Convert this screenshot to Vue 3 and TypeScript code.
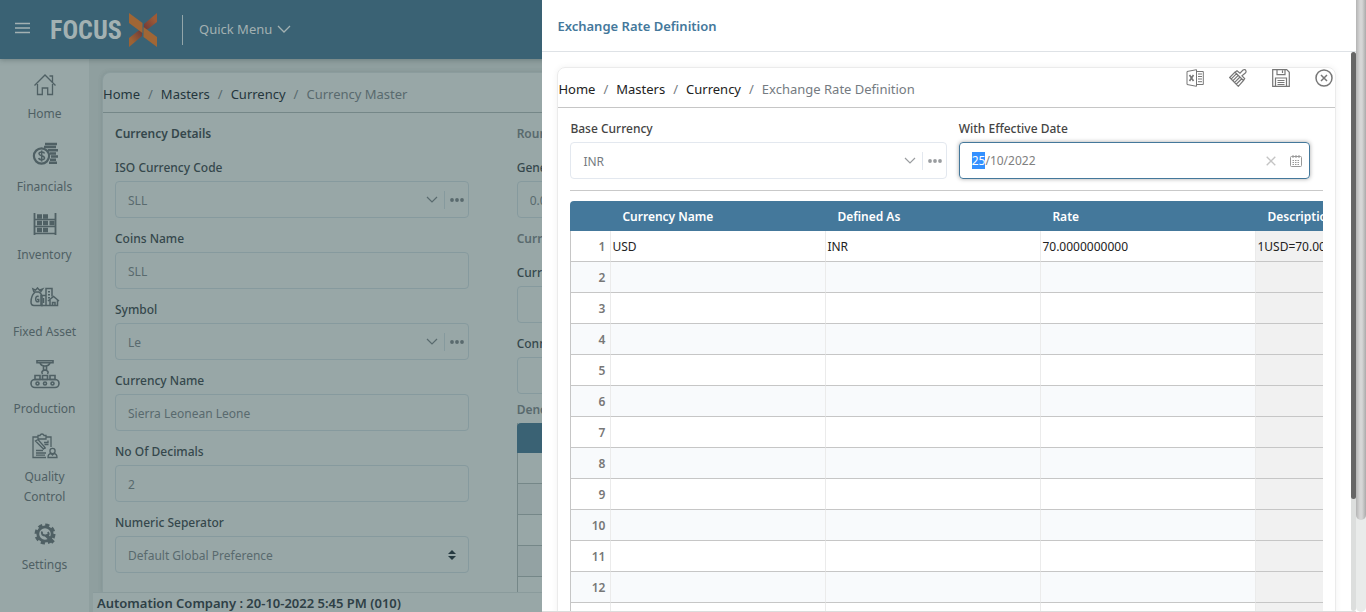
<script setup lang="ts">
import { onMounted, ref } from 'vue'

interface NavItem { label: string; icon: string; size: string }
interface Field { id: string; label: string; value: string; kind: 'combo' | 'text' | 'select' }

const nav: NavItem[] = [
  { label: 'Home', icon: 'home', size: 'first' },
  { label: 'Financials', icon: 'coins', size: 'medium' },
  { label: 'Inventory', icon: 'shelf', size: 'short' },
  { label: 'Fixed Asset', icon: 'asset', size: 'tall' },
  { label: 'Production', icon: 'production', size: 'tall' },
  { label: 'Quality Control', icon: 'quality', size: 'short' },
  { label: 'Settings', icon: 'gear', size: 'short' },
]

const fields: Field[] = [
  { id: 'iso', label: 'ISO Currency Code', value: 'SLL', kind: 'combo' },
  { id: 'coins', label: 'Coins Name', value: 'SLL', kind: 'text' },
  { id: 'symbol', label: 'Symbol', value: 'Le', kind: 'combo' },
  { id: 'name', label: 'Currency Name', value: 'Sierra Leonean Leone', kind: 'text' },
  { id: 'decimals', label: 'No Of Decimals', value: '2', kind: 'text' },
  { id: 'separator', label: 'Numeric Seperator', value: 'Default Global Preference', kind: 'select' },
]

const columns: string[] = ['Currency Name', 'Defined As', 'Rate', 'Description']
const rows: string[][] = Array.from({ length: 13 }, (_, i) =>
  i === 0 ? ['USD', 'INR', '70.0000000000', '1USD=70.0000000000INR'] : ['', '', '', ''],
)

const effectiveDate = ref('25/10/2022')
const dateInput = ref<HTMLInputElement | null>(null)

onMounted(() => {
  dateInput.value?.focus({ preventScroll: true })
  dateInput.value?.setSelectionRange(0, 2)
})
</script>

<template>
  <div class="shell">
    <div class="page">
      <header class="topbar">
        <button class="burger" type="button" aria-label="Toggle menu">
          <svg width="15" height="12" viewBox="0 0 15 12"><path d="M0 1.5h15M0 6h15M0 10.5h15" stroke="currentColor" stroke-width="1.6" /></svg>
        </button>
        <a class="logo" href="#">
          <span>FOCUS</span>
          <svg width="28" height="34" viewBox="0 0 28 34">
            <defs>
              <linearGradient id="armLow" x1="0" y1="1" x2="1" y2="0"><stop offset="0.3" stop-color="#9c6234" /><stop offset="1" stop-color="#6f3838" /></linearGradient>
              <linearGradient id="armHigh" x1="1" y1="0" x2="0" y2="1"><stop offset="0.3" stop-color="#9c5a36" /><stop offset="1" stop-color="#6f3838" /></linearGradient>
            </defs>
            <path d="M0 34V25L9 18Q13 16 13 20V23Z" fill="url(#armLow)" />
            <path d="M28 0V9L19 16Q15 18 15 14V11Z" fill="url(#armHigh)" />
            <path d="M0 0 13.5 10V20L0 10ZM28 34 14.5 24V14L28 24Z" fill="#a06635" />
          </svg>
        </a>
        <button class="quick" type="button">
          Quick Menu
          <svg width="14" height="8" viewBox="0 0 14 8"><path d="M1 1l6 6 6-6" fill="none" stroke="currentColor" stroke-width="1.3" /></svg>
        </button>
      </header>

      <div class="body">
        <nav class="sidebar">
          <a v-for="item in nav" :key="item.label" class="nav-item" href="#">
            <span class="nav-icon" :class="item.size">
              <svg v-if="item.icon === 'home'" width="24" height="24" viewBox="0 0 24 24" fill="none" stroke="currentColor" stroke-width="1.3">
                <path d="M1.5 12.5 12 2l10.500 10.500M16.500 3h3v6.500M4.500 11v10.500h4.800v-6.500h5.400v6.500h4.800V11" />
              </svg>
              <svg v-else-if="item.icon === 'coins'" width="26" height="24" viewBox="0 0 26 24" fill="none" stroke="currentColor">
                <circle cx="9.500" cy="14" r="7.600" stroke-width="2.200" />
                <path d="M12.500 11.500c-.5-2-5.500-2-5.500.3 0 2.500 5.500 1.500 5.500 4.200 0 2.300-5.300 2.300-5.800 0M9.700 8.500v11" stroke-width="1.500" />
                <path d="M13 2h12M12 5h12M16 8.200h10M18 11.400h6M19 14.600h7M18 17.800h6M17 20.800h8" stroke-width="2.500" />
              </svg>
              <svg v-else-if="item.icon === 'shelf'" width="24" height="24" viewBox="0 0 24 24" fill="none" stroke="currentColor">
                <path d="M1.500 1v22M22.500 1v22" stroke-width="1.800" />
                <path d="M1 7.500h22M1 14.500h22M1 21.500h22" stroke-width="1.400" />
                <path d="M4 4.500h5M10 4.500h5M4 11h5M10 11h5M16.500 11h5M4 18h5M10 18h5" stroke-width="4.400" />
              </svg>
              <svg v-else-if="item.icon === 'asset'" width="30" height="20" viewBox="0 0 30 20" fill="none" stroke="currentColor" stroke-width="1.500">
                <path d="M5 5C1 9 1 12 1 15q0 3.500 3 3.500h8V9Q11 6 9 5ZM4 5 3 2l2.500 1.200L7.500 1l2 2.200L12.500 2 10.500 5M8.700 9.500q-3-1-3 2.500t3 2.500v-2H7" />
                <path d="M11 18.500V8.500h5V1.500h6v8M16 8v10.500M13.500 11v5" />
                <path d="M19 4v9" stroke-width="2" stroke-dasharray="1.500 1.500" />
                <path d="m18 14 5.500-4.500 5.500 4.500M20 13v5.500h7.500V13M22.500 18.500v-3H25v3M11 18.500h9" />
              </svg>
              <svg v-else-if="item.icon === 'production'" width="30" height="30" viewBox="0 0 30 30" fill="none" stroke="currentColor" stroke-width="1.600">
                <path d="M7 1.800h16v2H7zM10 4q1 3 5 3t5-3M13.500 7h3v4h-3zM12.500 15q-2-3 2.500-4 4.500 1 2.500 4M5 16.500h5v4H5zM12.500 16.500h5v4h-5zM20 16.500h5v4h-5z" />
                <rect x="1" y="20.500" width="28" height="8" rx="4" />
                <circle cx="7.500" cy="24.500" r="1.500" /><circle cx="15" cy="24.500" r="1.500" /><circle cx="22.500" cy="24.500" r="1.500" />
              </svg>
              <svg v-else-if="item.icon === 'quality'" width="26" height="26" viewBox="0 0 26 26" fill="none" stroke="currentColor" stroke-width="1.300">
                <path d="M14 24.500H1V4h5M14 4h5v10M6 2.500h2q.500-1.500 2-1.500t2 1.500h2V6H6zM3.500 8l8 8 1.500-1.500L6 6.500zM13 16v-2M12 9.500h4v-2M12.500 11.500h4M4 17.500h7M4 20h10M4 22.200h9" />
                <circle cx="20.500" cy="18" r="2.600" />
                <path d="M16 24.500q0-3.500 3-4l1.500 1.500 1.500-1.500q3 .5 3 4z" />
              </svg>
              <svg v-else width="22" height="22" viewBox="0 0 22 22" fill="none" stroke="currentColor">
                <circle cx="11" cy="11" r="9.200" stroke-width="2.600" stroke-dasharray="4.200 3.020" />
                <circle cx="11" cy="11" r="7.200" stroke-width="2.800" />
                <path d="m12 12 7.500 7.500" stroke-width="3.600" />
                <path d="M8 8.500q-1 4 3.500 4t2.500-3.500" stroke-width="2" />
              </svg>
            </span>
            <span class="nav-label">{{ item.label }}</span>
          </a>
        </nav>

        <main class="main">
          <section class="card">
            <nav class="crumbs" aria-label="Page path">
              <a href="#">Home</a><i>/</i><a href="#">Masters</a><i>/</i><a href="#">Currency</a><i>/</i><span>Currency Master</span>
            </nav>
            <div class="columns">
              <div>
                <h2 class="strong">Currency Details</h2>
                <div v-for="f in fields" :key="f.id">
                  <label :for="f.id">{{ f.label }}</label>
                  <div class="control">
                    <select v-if="f.kind === 'select'" :id="f.id"><option>{{ f.value }}</option></select>
                    <input v-else :id="f.id" type="text" :value="f.value" />
                    <svg v-if="f.kind === 'select'" class="sorter" width="8" height="10" viewBox="0 0 8 10"><path d="M0 4l4-4 4 4zM0 6h8l-4 4z" fill="currentColor" /></svg>
                    <template v-if="f.kind === 'combo'">
                      <button type="button" aria-label="Open list"><svg width="12" height="8" viewBox="0 0 12 8"><path d="M1 1l5 5 5-5" fill="none" stroke="currentColor" stroke-width="1.200" /></svg></button>
                      <button class="more" type="button" aria-label="More"><svg width="14" height="4" viewBox="0 0 14 4" fill="currentColor"><circle cx="2" cy="2" r="1.900" /><circle cx="7" cy="2" r="1.900" /><circle cx="12" cy="2" r="1.900" /></svg></button>
                    </template>
                  </div>
                </div>
              </div>
              <div>
                <h2>Rounding</h2>
                <label for="general">General</label>
                <div class="control"><input id="general" type="text" value="0.00" /></div>
                <h2>Currency</h2>
                <label for="unit">Currency</label>
                <div class="control"><input id="unit" type="text" /></div>
                <label for="connector">Connector</label>
                <div class="control"><input id="connector" type="text" /></div>
                <h2 class="tight">Denomination</h2>
                <div class="mini"><div v-for="n in 6" :key="n"></div></div>
              </div>
            </div>
          </section>
          <footer class="status">Automation Company : 20-10-2022 5:45 PM (010)</footer>
        </main>
      </div>

      <aside class="drawer">
        <h1>Exchange Rate Definition</h1>
        <div class="drawer-scroll">
          <div class="drawer-body">
            <section class="panel">
              <div class="panel-head">
                <nav class="crumbs" aria-label="Drawer path">
                  <a href="#">Home</a><i>/</i><a href="#">Masters</a><i>/</i><a href="#">Currency</a><i>/</i><span>Exchange Rate Definition</span>
                </nav>
                <div class="tools">
                  <button type="button" aria-label="Export to Excel">
                    <svg width="18" height="18" viewBox="0 0 18 18" fill="none" stroke="currentColor"><path d="M1 2.500 10.500.7v16.600L1 15.500zM10.500 2.500h6.800v13h-6.800M12 5h4M12 7.500h4M12 10h4M12 12.700h4" /><path d="M3.500 6l4 6M7.500 6l-4 6" stroke-width="1.600" /></svg>
                  </button>
                  <button type="button" aria-label="Clear">
                    <svg width="18" height="18" viewBox="0 0 18 18" fill="none" stroke="currentColor" stroke-width="1.200"><path d="M.7 8.500 6 3.200l8.500 8.300L9.300 17.300zM6 3.200l2-1.500 3 2.500L14 1q2.500-1.200 3 1 .3 1-1 2.300l-3 2.500 2.700 2.700-1.200 2M2.300 9.800l5-5M4 11.600l5.200-5.200M5.700 13.300 11 8M7.400 15l5.400-5.200" /></svg>
                  </button>
                  <button type="button" aria-label="Save">
                    <svg width="18" height="18" viewBox="0 0 18 18" fill="none" stroke="currentColor" stroke-width="1.200"><path d="M.7.700h14l2.600 2.600v14H.700zM5 .7v5h8v-5M10.500 1.500v2.500M3.500 17.300V9h11v8.300M5.500 11.500h7M5.500 13.500h7M5.500 15.500h7" /></svg>
                  </button>
                  <button type="button" aria-label="Close">
                    <svg width="18" height="18" viewBox="0 0 18 18" fill="none" stroke="currentColor" stroke-width="1.500"><circle cx="9" cy="9" r="8" /><path d="m6 6 6 6M12 6l-6 6" /></svg>
                  </button>
                </div>
              </div>

              <div class="panel-body">
                <div class="filters">
                  <div>
                    <label for="base">Base Currency</label>
                    <div class="control">
                      <input id="base" type="text" value="INR" />
                      <button type="button" aria-label="Open list"><svg width="12" height="8" viewBox="0 0 12 8"><path d="M1 1l5 5 5-5" fill="none" stroke="currentColor" stroke-width="1.200" /></svg></button>
                      <button class="more" type="button" aria-label="More"><svg width="14" height="4" viewBox="0 0 14 4" fill="currentColor"><circle cx="2" cy="2" r="1.900" /><circle cx="7" cy="2" r="1.900" /><circle cx="12" cy="2" r="1.900" /></svg></button>
                    </div>
                  </div>
                  <div class="date">
                    <label for="effective">With Effective Date</label>
                    <div class="control focused">
                      <input id="effective" ref="dateInput" v-model="effectiveDate" type="text" />
                      <button class="clear" type="button" aria-label="Clear date"><svg width="10" height="10" viewBox="0 0 10 10"><path d="m.7.700 8.600 8.600M9.300.700.700 9.300" stroke="currentColor" stroke-width="1.300" /></svg></button>
                      <button class="calendar" type="button" aria-label="Pick date"><svg width="12" height="12" viewBox="0 0 12 12" fill="none" stroke="currentColor"><rect x=".5" y="1.500" width="11" height="10" rx="1" /><path d="M3 0v3M6 0v3M9 0v3" /><path d="M2.500 5.500h7M2.500 7.500h7M2.500 9.500h7" stroke-dasharray="1.500 1" stroke-width="1.200" /></svg></button>
                    </div>
                  </div>
                </div>

                <div class="table-wrap">
                  <table>
                    <colgroup><col class="c-num" /><col v-for="c in columns" :key="c" class="c-data" /></colgroup>
                    <thead><tr><th></th><th v-for="c in columns" :key="c" scope="col">{{ c }}</th></tr></thead>
                    <tbody>
                      <tr v-for="(row, r) in rows" :key="r">
                        <th scope="row">{{ r + 1 }}</th>
                        <td v-for="(cell, c) in row" :key="c">{{ cell }}</td>
                      </tr>
                    </tbody>
                  </table>
                </div>
              </div>
            </section>
          </div>
          <div class="inner-bar"><div></div></div>
        </div>
      </aside>
    </div>
    <div class="outer-bar"><div></div></div>
  </div>
</template>

<style>
body { margin: 0; }
</style>

<style scoped>
* { box-sizing: border-box; }
.shell {
  --ink: #24363d;
  --muted: #596a6e;
  --label: #35474c;
  --line: #869a9e;
  display: flex;
  height: 100vh;
  overflow: hidden;
  font-family: "Segoe UI", "Noto Sans", "Open Sans", sans-serif;
  font-size: 12px;
}
button { border: 0; padding: 0; background: none; color: inherit; font: inherit; display: flex; align-items: center; }
a { color: inherit; text-decoration: none; }
svg { display: block; flex: none; }
.page { position: relative; flex: 1; min-width: 0; display: flex; flex-direction: column; background: #8f9f9f; overflow: hidden; }

.topbar { flex: none; height: 59px; padding: 0 0 2px 15px; display: flex; align-items: center; background: #3a6274; color: #a3b1b2; box-shadow: 0 1px 5px rgba(40, 60, 60, 0.35); z-index: 1; }
.burger { margin-right: 20px; margin-bottom: 2px; }
.logo { display: flex; align-items: center; gap: 7px; margin-top: 3px; padding-right: 25px; border-right: 1px solid #93a6aa; height: 30px; }
.logo span { width: 72px; font: bold 26px/30px "Liberation Sans Narrow", "Roboto Condensed", sans-serif; }
.quick { margin-left: 16px; gap: 5px; font-size: 13px; }

.body { flex: 1; min-height: 0; display: flex; }
.sidebar { flex: none; width: 89px; background: #98a7a7; color: #4f6064; overflow: hidden; }
.nav-item { display: flex; flex-direction: column; align-items: center; font-size: 12px; line-height: 20px; text-align: center; }
.nav-label { padding: 0 16px; }
.nav-item:not(:nth-child(6)) .nav-label { padding: 0; }
.nav-icon { display: flex; align-items: center; padding-top: 6px; }
.first { height: 45px; }
.short { height: 48px; }
.medium { height: 53px; }
.tall { height: 57px; }

.main { flex: 1; min-width: 0; display: flex; flex-direction: column; padding-left: 4px; }
.card { flex: 1; min-height: 0; overflow: hidden; margin: 13px 12px 0 9px; background: #98a7a7; border: 1px solid #8b9c9d; border-bottom: 0; border-radius: 8px 8px 0 0; box-shadow: 0 0 4px rgba(70, 90, 90, 0.2); }
.crumbs { display: flex; align-items: center; height: 40px; padding-top: 2px; font-size: 13px; color: var(--muted); border-bottom: 1px solid #758788; white-space: nowrap; }
.crumbs a { color: var(--ink); }
.crumbs i { font-style: normal; margin: 0 8px; }
.columns { display: grid; grid-template-columns: repeat(3, 1fr); gap: 48px; padding: 0 71px 0 12px; }
h2, label { display: block; margin: 0; padding: 11px 0 3px; font-size: 12px; line-height: 20px; font-weight: 500; color: var(--label); white-space: nowrap; }
h2 { font-weight: 600; color: var(--muted); }
h2.strong { color: var(--label); }
h2.tight { padding: 6px 0 3px; }
.control { display: flex; align-items: center; height: 37px; padding-right: 4px; border: 1px solid var(--line); border-radius: 4px; color: var(--muted); }
.control input, .control select { flex: 1; min-width: 0; width: 100%; height: 100%; margin: 0; padding: 2px 12px 0; border: 0; outline: 0; appearance: none; background: transparent; color: var(--muted); font: inherit; }
.control .more { margin-left: 6px; padding-left: 5px; height: 18px; border-left: 1px solid var(--line); }
.sorter { color: #263a41; margin-right: 8px; }
.mini { border-left: 1px solid #758788; }
.mini div { height: 31px; border-bottom: 1px solid #758788; }
.mini div:nth-child(odd) { background: #93a2a3; }
.mini div:first-child { height: 30px; margin-left: -1px; background: #3a6274; border: 0; border-radius: 4px 0 0 0; }
.mini div:nth-child(even) { background: #98a7a7; }
.status { flex: none; height: 20px; padding-left: 4px; border-top: 1px solid #8a9b9c; background: #98a7a7; color: #2e4046; font-size: 13px; line-height: 20px; font-weight: 600; }

.drawer {
  --ink: #222;
  --muted: #757b81;
  --label: #444;
  --line: #e3e8ef;
  position: absolute; top: 0; right: 0; bottom: 0; z-index: 2; width: 60%;
  display: flex; flex-direction: column; background: #fff; border-bottom: 1px solid #dcdcdc;
}
h1 { flex: none; height: 52px; margin: 0; padding-left: 15px; border-bottom: 1px solid #dee2e6; font-size: 13px; line-height: 53px; font-weight: 600; color: #44789b; }
.drawer-scroll { flex: 1; min-height: 0; display: flex; }
.drawer-body { flex: 1; min-width: 0; overflow: hidden; padding: 15px 15px 0 15px; }
.panel { border: 1px solid #ebebeb; border-radius: 8px; box-shadow: 0 0 6px rgba(0, 0, 0, 0.06); }
.panel-head { display: flex; justify-content: space-between; height: 40px; border-bottom: 1px solid #c6c6c6; }
.panel-head .crumbs { border: 0; }
.tools { display: flex; align-items: flex-start; gap: 25px; padding: 1px 2px 0 0; color: #777; }
.panel-body { padding: 0 12px; }
.filters { display: grid; grid-template-columns: 1fr 1fr; padding-bottom: 11px; border-bottom: 1px solid #c9c9c9; }
.date { padding: 0 13px 0 12px; }
.control button { color: #9a9da0; }
.card .control button { color: #596a6e; }
.control.focused { border-color: #44789b; box-shadow: 0 0 4px rgba(0, 0, 0, 0.35); padding-right: 7px; }
.focused input { padding-top: 0; color: #808080; }
.focused input::selection { background: #3390ff; color: #fff; }
.control .clear { color: #c4c4c4; margin-right: 14px; }
.control .calendar { color: #999; }

.table-wrap { margin-top: 10px; overflow: hidden; border-radius: 4px 0 0 0; }
table { width: 901px; table-layout: fixed; border-collapse: separate; border-spacing: 0; }
.c-num { width: 41px; }
.c-data { width: 215px; }
thead th { height: 30px; padding: 0 11px; background: #44789b; color: #fff; font-weight: 600; text-align: left; }
tbody th { height: 31px; padding: 0 5px 0 0; text-align: right; font-weight: 600; color: #777; border-left: 1px solid #c6c6c6; }
tbody th, tbody td { border-bottom: 1px solid #c6c6c6; border-right: 1px solid #ebebeb; }
tbody td { padding: 0 1px; color: #222; white-space: nowrap; }
tbody tr:nth-child(even) { background: #f8fafc; }
tbody td:last-child { background: #f1f1f1; }

.inner-bar { flex: none; width: 5px; background: #dcdedd; border-radius: 3px; }
.inner-bar div { height: 80%; background: #666; border-radius: 3px; }
.outer-bar { flex: none; width: 10px; background: #e9ebea; border-radius: 5px; }
.outer-bar div { height: 85%; background: linear-gradient(90deg, #b4b4b4, #d6d6d6 40%, #d6d6d6 60%, #aaa); border-radius: 0 0 5px 5px; }
</style>
